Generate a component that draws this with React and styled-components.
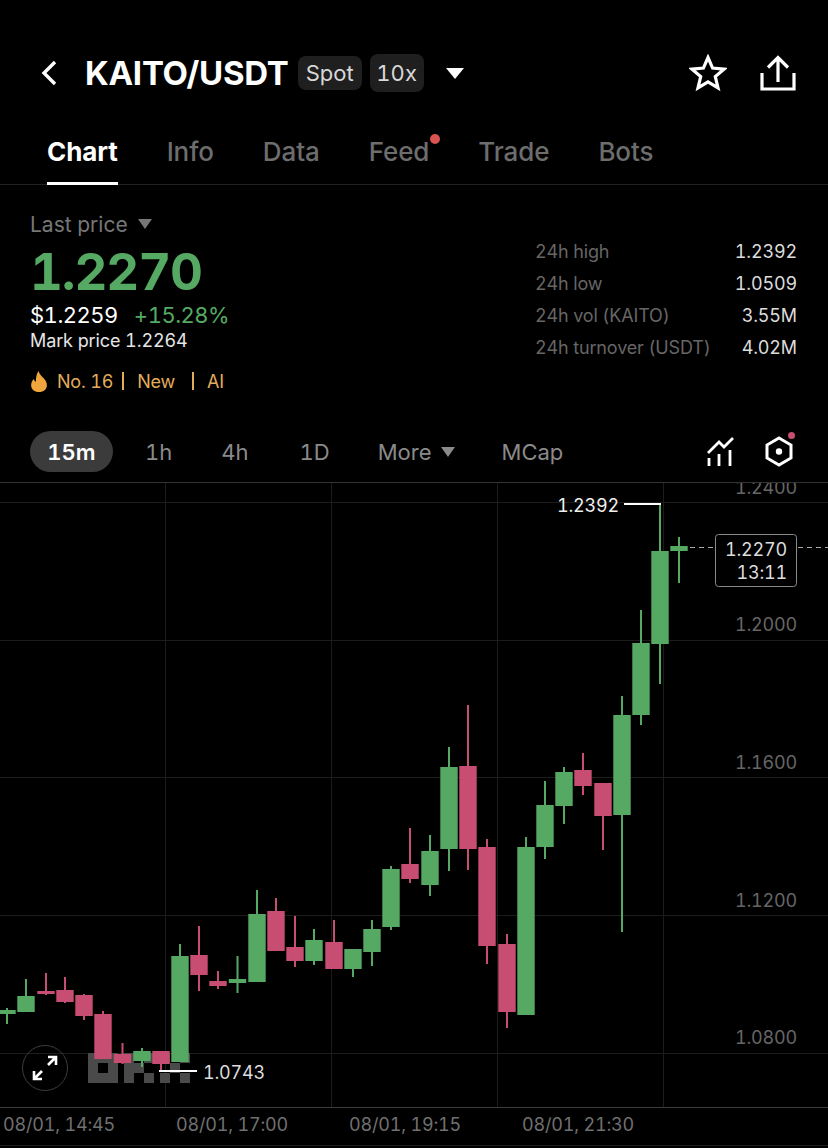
import styled, { createGlobalStyle } from "styled-components"

const GREEN = "#55a962"
const RED = "#c84d72"

// [center x, wick top, body top, body bottom, wick bottom, rising]
const candles = [
    [7, 1008, 1010, 1014, 1024, true],
    [26, 979, 996, 1012, 1012, true],
    [46, 973, 991, 994, 995, false],
    [65, 977, 990, 1002, 1003, false],
    [84, 994, 995, 1016, 1020, false],
    [103, 1011, 1014, 1059, 1059, false],
    [122.5, 1043, 1054, 1063, 1064, false],
    [142, 1048, 1051, 1061, 1067, true],
    [161, 1051, 1051, 1064, 1072, false],
    [180, 944, 956, 1062, 1062, true],
    [199, 926, 955, 975, 991, false],
    [218, 971, 981, 986, 989, false],
    [237.5, 956, 979, 983, 993, true],
    [257, 890, 914, 982, 982, true],
    [276, 898, 911, 951, 951, false],
    [295, 916, 947, 961, 967, false],
    [314, 929, 940, 961, 965, true],
    [334, 920, 942, 969, 969, false],
    [353, 949, 949, 969, 977, true],
    [372, 920, 929, 952, 966, true],
    [391, 866, 869, 927, 930, true],
    [410, 828, 864, 879, 883, false],
    [430, 835, 851, 885, 896, true],
    [449, 747, 767, 849, 871, true],
    [468, 705, 766, 849, 870, false],
    [487, 839, 847, 946, 964, false],
    [507, 934, 944, 1012, 1028, false],
    [526, 837, 847, 1015, 1015, true],
    [545, 781, 805, 847, 859, true],
    [564, 767, 772, 806, 824, true],
    [583, 753, 770, 786, 795, false],
    [603, 783, 783, 816, 850, false],
    [622, 696, 715, 815, 932, true],
    [641, 610, 643, 715, 725, true],
    [660, 505, 551, 644, 684, true],
    [679, 537, 546, 551, 583, true],
]

const gridRows = [502, 640, 777, 915, 1053]
const gridColumns = [165, 331, 497, 663]
const priceLabels = [
    ["1.2400", 487],
    ["1.2000", 624],
    ["1.1600", 762],
    ["1.1200", 900],
    ["1.0800", 1037],
]
const logoCells = [
    [88, 1053, 30, 10], [88, 1073, 30, 10], [88, 1063, 10, 10], [108, 1063, 10, 10],
    [124, 1053, 10, 30], [134, 1063, 10, 10], [144, 1053, 10, 10], [144, 1073, 10, 10],
    [160, 1053, 10, 10], [160, 1073, 10, 10], [170, 1063, 10, 10], [180, 1053, 10, 10], [180, 1073, 10, 10],
]
const tabs = ["Chart", "Info", "Data", "Feed", "Trade", "Bots"]
const stats = [
    ["24h high", "1.2392"],
    ["24h low", "1.0509"],
    ["24h vol (KAITO)", "3.55M"],
    ["24h turnover (USDT)", "4.02M"],
]
const times = ["08/01, 14:45", "08/01, 17:00", "08/01, 19:15", "08/01, 21:30"]

const GlobalStyle = createGlobalStyle`
    html, body {
        margin: 0;
        background: #000;
    }
    body {
        font-family: Inter, "Liberation Sans", sans-serif;
        font-variant-numeric: tabular-nums;
    }
`
const Page = styled.div`
    width: 828px;
    height: 1148px;
    overflow: hidden;
    background: #000;
    color: #fff;
`
const Header = styled.header`
    display: flex;
    align-items: center;
    height: 114px;
    padding: 32px 32px 0 38px;
    box-sizing: border-box;
`
const BackButton = styled.svg`
    width: 24px;
    height: 28px;
    margin-right: 23px;
`
const Title = styled.h1`
    margin: 0 9px 0 0;
    font-size: 33px;
    font-weight: 700;
    letter-spacing: -0.25px;
    color: #fff;
`
const Badge = styled.span`
    display: flex;
    align-items: center;
    justify-content: center;
    width: ${props => props.$width}px;
    height: ${props => props.$height}px;
    margin-right: 8px;
    border-radius: 8px;
    background: #1f1f1f;
    font-size: 22px;
    color: #d8d8d8;
`
const HeaderCaret = styled.svg`
    width: 18px;
    height: 11px;
    margin-left: 14px;
`
const HeaderActions = styled.div`
    display: flex;
    align-items: center;
    gap: 33px;
    margin-left: auto;
`
const TabBar = styled.nav`
    display: flex;
    gap: 49px;
    height: 71px;
    padding-left: 47px;
    box-sizing: border-box;
    border-bottom: 1px solid #222;
`
const Tab = styled.span`
    position: relative;
    height: 71px;
    box-sizing: border-box;
    padding-top: 22px;
    font-size: 26px;
    font-weight: ${props => (props.$active ? 700 : 500)};
    letter-spacing: -0.1px;
    color: ${props => (props.$active ? "#fff" : "#6d6d6d")};
    border-bottom: 3px solid ${props => (props.$active ? "#fff" : "transparent")};
`
const TabDot = styled.i`
    position: absolute;
    top: 20px;
    right: -11px;
    width: 10px;
    height: 10px;
    border-radius: 50%;
    background: #d9534f;
`
const Summary = styled.section`
    display: flex;
    justify-content: space-between;
    height: 237px;
    padding: 26px 31px 0 30px;
    box-sizing: border-box;
`
const PriceColumn = styled.div`
    display: flex;
    flex-direction: column;
`
const LastPrice = styled.div`
    display: flex;
    align-items: center;
    gap: 10px;
    height: 26px;
    font-size: 21px;
    color: #777;
`
const BigPrice = styled.div`
    margin-top: 5px;
    font-size: 51px;
    line-height: 60px;
    font-weight: 700;
    letter-spacing: -1.1px;
    color: ${GREEN};
`
const QuoteRow = styled.div`
    display: flex;
    gap: 16px;
    margin-top: -1px;
    font-size: 22px;
    line-height: 28px;
    letter-spacing: -0.5px;
`
const Change = styled.span`
    color: ${GREEN};
`
const MarkPrice = styled.div`
    font-size: 18px;
    line-height: 23px;
    letter-spacing: -0.1px;
    color: #e6e6e6;
`
const TagRow = styled.div`
    display: flex;
    align-items: center;
    margin-top: 17px;
    height: 24px;
    font-size: 18px;
    letter-spacing: -0.2px;
    color: #e3ac5c;
`
const TagDivider = styled.i`
    width: 2px;
    height: 18px;
    margin: 0 13px 0 ${props => props.$before}px;
    background: #e3ac5c;
`
const StatTable = styled.div`
    display: grid;
    grid-template-columns: auto auto;
    justify-content: space-between;
    width: 262px;
    margin-top: 24px;
    grid-auto-rows: 32px;
    align-content: start;
    align-items: center;
    font-size: 18px;
    letter-spacing: -0.15px;
`
const StatLabel = styled.span`
    color: #666;
`
const StatValue = styled.span`
    text-align: right;
    color: #dcdcdc;
`
const IntervalBar = styled.div`
    display: flex;
    align-items: center;
    height: 60px;
    padding: 0 32px 1px 30px;
    box-sizing: border-box;
`
const Interval = styled.span`
    display: flex;
    align-items: center;
    justify-content: center;
    gap: 9px;
    height: 41px;
    width: ${props => (props.$active ? "83px" : "auto")};
    margin-right: ${props => props.$gap}px;
    border-radius: 21px;
    background: ${props => (props.$active ? "#3b3b3b" : "transparent")};
    font-size: 22px;
    font-weight: ${props => (props.$active ? 600 : 400)};
    color: ${props => (props.$active ? "#fff" : "#8a8a8a")};
`
const ChartTools = styled.div`
    display: flex;
    align-items: center;
    gap: 31px;
    margin-left: auto;
`
const ChartArea = styled.div`
    position: relative;
    height: 626px;
    box-sizing: border-box;
    border-top: 1px solid #333;
    border-bottom: 1px solid #3a3a3a;
`
const ChartSvg = styled.svg`
    display: block;
    width: 828px;
    height: 624px;
`
const AxisLabel = styled.text`
    font-family: Inter, "Liberation Sans", sans-serif;
    font-size: 18px;
    letter-spacing: -0.2px;
    fill: ${props => props.$fill || "#666"};
    text-anchor: ${props => props.$anchor || "start"};
    dominant-baseline: central;
`
const ExpandButton = styled.button`
    position: absolute;
    left: 22px;
    top: 562px;
    display: flex;
    align-items: center;
    justify-content: center;
    width: 46px;
    height: 46px;
    padding: 0;
    border: 1px solid #3d3d3d;
    border-radius: 50%;
    background: transparent;
`
const TimeAxis = styled.div`
    display: grid;
    grid-template-columns: repeat(4, 173px);
    padding: 6px 0 0 3px;
    height: 38px;
    box-sizing: border-box;
    border-bottom: 1px solid #1e1e1e;
    font-size: 18px;
    line-height: 22px;
    letter-spacing: -0.2px;
    color: #707070;
`

const Caret = ({ color }) => (
    <svg width="14" height="10" viewBox="0 0 14 10">
        <path d="M0 0h14L7 10z" fill={color} />
    </svg>
)

const Candle = ({ data }) => {
    const [x, wickTop, top, bottom, wickBottom, rising] = data
    const color = rising ? GREEN : RED
    return (
        <g fill={color}>
            <rect x={x - 1} y={wickTop} width="2" height={wickBottom - wickTop} />
            <rect x={x - 8.7} y={top} width="17.4" height={bottom - top} />
        </g>
    )
}

const Chart = () => (
    <ChartSvg viewBox="0 483 828 624">
        {gridRows.map(y => (
            <rect key={y} x="0" y={y} width="828" height="1" fill="#1c1c1c" />
        ))}
        {gridColumns.map(x => (
            <rect key={x} x={x} y="483" width="1" height="624" fill="#1c1c1c" />
        ))}
        <g fill="#4a4a4a">
            {logoCells.map(([x, y, w, h]) => (
                <rect key={`${x}-${y}`} x={x} y={y} width={w} height={h} />
            ))}
        </g>
        {candles.map(c => (
            <Candle key={c[0]} data={c} />
        ))}
        {priceLabels.map(([text, y]) => (
            <AxisLabel key={text} x="797" y={y} $anchor="end">{text}</AxisLabel>
        ))}

        <rect x="624" y="503" width="37" height="2" fill="#fff" />
        <AxisLabel x="619" y="505" $anchor="end" $fill="#eee">1.2392</AxisLabel>
        <rect x="159" y="1070" width="38" height="2" fill="#fff" />
        <AxisLabel x="203" y="1072" $fill="#ddd">1.0743</AxisLabel>

        <line x1="690" y1="547.5" x2="828" y2="547.5" stroke="#aaa" strokeDasharray="5 4" />
        <rect x="715.5" y="534.5" width="81" height="52" rx="3" fill="#000" stroke="#8a8a8a" />
        <AxisLabel x="787" y="549" $anchor="end" $fill="#ddd">1.2270</AxisLabel>
        <AxisLabel x="787" y="572" $anchor="end" $fill="#ddd">13:11</AxisLabel>
    </ChartSvg>
)

const Row = ({ label, value }) => (
    <>
        <StatLabel>{label}</StatLabel>
        <StatValue>{value}</StatValue>
    </>
)

const App = () => {
    return (
        <Page>
            <GlobalStyle />
            <Header>
                <BackButton viewBox="0 0 24 28">
                    <path d="M17 3L6 14l11 11" fill="none" stroke="#fff" strokeWidth="3.4" />
                </BackButton>
                <Title>KAITO/USDT</Title>
                <Badge $width={64} $height={34}>Spot</Badge>
                <Badge $width={54} $height={38}>10x</Badge>
                <HeaderCaret viewBox="0 0 18 11">
                    <path d="M0 0h18L9 11z" fill="#fff" />
                </HeaderCaret>
                <HeaderActions>
                    <svg width="38" height="38" viewBox="0 0 38 38">
                        <path
                            d="M19 3.5l4.6 10.6 11.4 1-8.7 7.5 2.7 11.2L19 27.800 9 33.800l2.7-11.200L3 15.100l11.400-1z"
                            fill="none"
                            stroke="#fff"
                            strokeWidth="3.2"
                        />
                    </svg>
                    <svg width="36" height="38" viewBox="0 0 36 38">
                        <path
                            d="M2 19v16h32V19M18 28V4M8 13.5L18 3.5l10 10"
                            fill="none"
                            stroke="#fff"
                            strokeWidth="3.2"
                        />
                    </svg>
                </HeaderActions>
            </Header>
            <TabBar>
                {tabs.map(tab => (
                    <Tab key={tab} $active={tab === "Chart"}>
                        {tab}
                        {tab === "Feed" && <TabDot />}
                    </Tab>
                ))}
            </TabBar>
            <Summary>
                <PriceColumn>
                    <LastPrice>
                        Last price
                        <Caret color="#777" />
                    </LastPrice>
                    <BigPrice>1.2270</BigPrice>
                    <QuoteRow>
                        <span>$1.2259</span>
                        <Change>+15.28%</Change>
                    </QuoteRow>
                    <MarkPrice>Mark price 1.2264</MarkPrice>
                    <TagRow>
                        <svg width="18" height="21" viewBox="0 0 17 20" style={{ marginRight: 9 }}>
                            <path
                                d="M8 0c1 3.500 3 4.600 5 7 1.600 1.900 3 3.700 3 6.500C16 17.400 12.800 20 8.500 20S1 17.400 1 13.500c0-2.500 1-4.500 2.600-6 .3 1.500 1 2.300 2 2.800C5.500 6.500 6 3 8 0z"
                                fill="#f0a63c"
                            />
                        </svg>
                        No. 16
                        <TagDivider $before={9} />
                        New
                        <TagDivider $before={17} />
                        AI
                    </TagRow>
                </PriceColumn>
                <StatTable>
                    {stats.map(([label, value]) => (
                        <Row key={label} label={label} value={value} />
                    ))}
                </StatTable>
            </Summary>
            <IntervalBar>
                <Interval $active $gap={32}>15m</Interval>
                <Interval $gap={49}>1h</Interval>
                <Interval $gap={51}>4h</Interval>
                <Interval $gap={48}>1D</Interval>
                <Interval $gap={47}>
                    More
                    <Caret color="#8a8a8a" />
                </Interval>
                <Interval $gap={0}>MCap</Interval>
                <ChartTools>
                    <svg width="28" height="30" viewBox="0 0 28 30">
                        <path
                            d="M2 16L13 5l5 5 9-9M3 29v-8M13 29V17M24 29V13"
                            fill="none"
                            stroke="#fff"
                            strokeWidth="2.8"
                        />
                    </svg>
                    <svg width="31" height="40" viewBox="0 0 31 40">
                        <path d="M14 6l12 7v13l-12 7-12-7V13z" fill="none" stroke="#fff" strokeWidth="3" />
                        <circle cx="14" cy="19.5" r="3.2" fill="#fff" />
                        <circle cx="26.5" cy="3.5" r="3.5" fill="#c84d72" />
                    </svg>
                </ChartTools>
            </IntervalBar>
            <ChartArea>
                <Chart />
                <ExpandButton>
                    <svg width="26" height="26" viewBox="0 0 26 26">
                        <path
                            d="M2 24l8-8M2 16v8h8M24 2l-8 8M16 2h8v8"
                            fill="none"
                            stroke="#fff"
                            strokeWidth="2.6"
                        />
                    </svg>
                </ExpandButton>
            </ChartArea>
            <TimeAxis>
                {times.map(time => (
                    <span key={time}>{time}</span>
                ))}
            </TimeAxis>
        </Page>
    )
}

export default App
